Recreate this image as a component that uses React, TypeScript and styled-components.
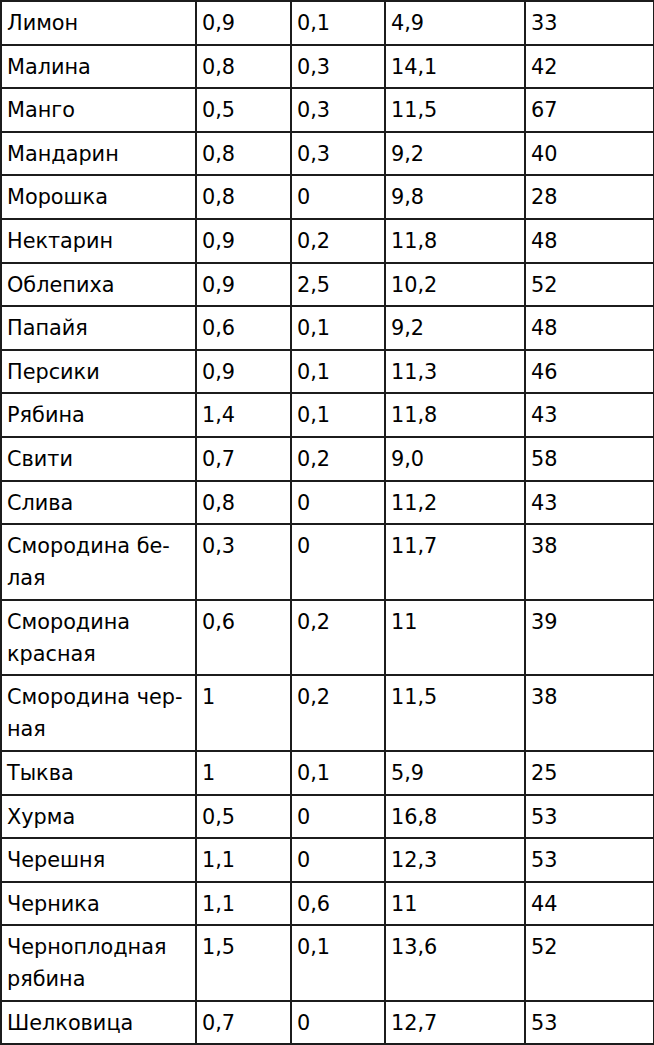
import React from "react";
import styled, { createGlobalStyle } from "styled-components";

const Global = createGlobalStyle`
  html, body { margin: 0; padding: 0; background: #fff; }
`;

const Table = styled.table`
  border-collapse: collapse;
  table-layout: fixed;
  width: 653px;
  font-family: "DejaVu Sans", "Liberation Sans", sans-serif;
  font-size: 20.8px;
  color: #000;
`;

const Col = styled.col<{ $w: number }>`
  width: ${(p) => p.$w}px;
`;

const Cell = styled.td`
  border: 2px solid #1c1c1c;
  padding: 5px 4px 4.6px 5px;
  line-height: 32px;
  vertical-align: top;
  white-space: nowrap;
  overflow: hidden;
`;

type Row = [string[], string, string, string, string];

const rows: Row[] = [
  [["Лимон"], "0,9", "0,1", "4,9", "33"],
  [["Малина"], "0,8", "0,3", "14,1", "42"],
  [["Манго"], "0,5", "0,3", "11,5", "67"],
  [["Мандарин"], "0,8", "0,3", "9,2", "40"],
  [["Морошка"], "0,8", "0", "9,8", "28"],
  [["Нектарин"], "0,9", "0,2", "11,8", "48"],
  [["Облепиха"], "0,9", "2,5", "10,2", "52"],
  [["Папайя"], "0,6", "0,1", "9,2", "48"],
  [["Персики"], "0,9", "0,1", "11,3", "46"],
  [["Рябина"], "1,4", "0,1", "11,8", "43"],
  [["Свити"], "0,7", "0,2", "9,0", "58"],
  [["Слива"], "0,8", "0", "11,2", "43"],
  [["Смородина бе-", "лая"], "0,3", "0", "11,7", "38"],
  [["Смородина", "красная"], "0,6", "0,2", "11", "39"],
  [["Смородина чер-", "ная"], "1", "0,2", "11,5", "38"],
  [["Тыква"], "1", "0,1", "5,9", "25"],
  [["Хурма"], "0,5", "0", "16,8", "53"],
  [["Черешня"], "1,1", "0", "12,3", "53"],
  [["Черника"], "1,1", "0,6", "11", "44"],
  [["Черноплодная", "рябина"], "1,5", "0,1", "13,6", "52"],
  [["Шелковица"], "0,7", "0", "12,7", "53"],
];

const widths = [195, 95, 94, 140, 129];

export default function App() {
  return (
    <>
      <Global />
      <Table>
        <colgroup>
          {widths.map((w, i) => (
            <Col key={i} $w={w} />
          ))}
        </colgroup>
        <tbody>
          {rows.map(([name, a, b, c, d], i) => (
            <tr key={i}>
              <Cell>
                {name.map((l, j) => (
                  <React.Fragment key={j}>
                    {j > 0 && <br />}
                    {l}
                  </React.Fragment>
                ))}
              </Cell>
              <Cell>{a}</Cell>
              <Cell>{b}</Cell>
              <Cell>{c}</Cell>
              <Cell>{d}</Cell>
            </tr>
          ))}
        </tbody>
      </Table>
    </>
  );
}
